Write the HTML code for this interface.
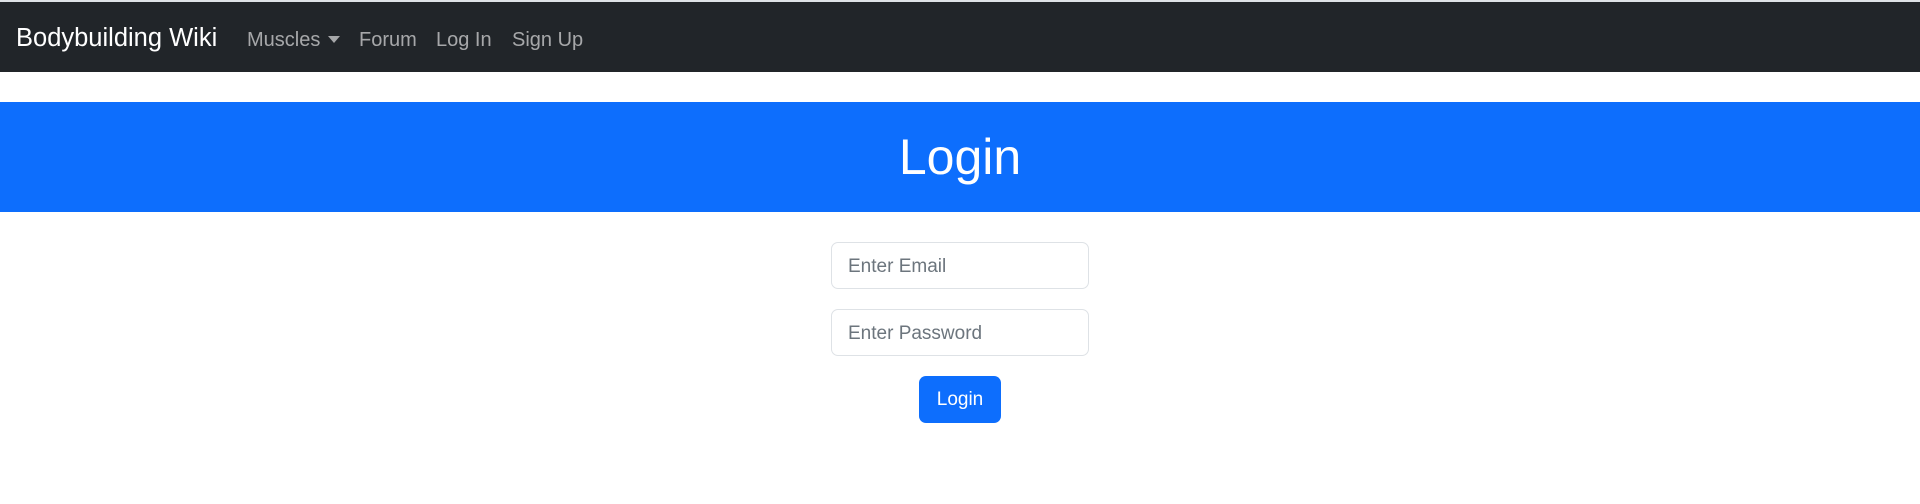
<!DOCTYPE html>
<html><head><style>
body{margin:0;width:1920px;height:504px;background:#fff;font-family:"Liberation Sans",sans-serif;overflow:hidden;position:relative}
.nav{position:absolute;top:2px;left:0;width:1920px;height:70px;background:#212529}
.top{position:absolute;top:0;left:0;width:1920px;height:2px;background:#dee2e6}
.brand{position:absolute;left:16px;top:22px;font-size:25.5px;color:#fff}
.link{position:absolute;top:27px;font-size:20px;color:rgba(255,255,255,.6)}
.caret{position:absolute;left:328px;top:34px;width:0;height:0;border-left:6px solid transparent;border-right:6px solid transparent;border-top:7px solid rgba(255,255,255,.6)}
.band{position:absolute;top:102px;left:0;width:1920px;height:110px;background:#0d6efd;color:#fff;text-align:center;font-size:50px;font-weight:300;line-height:110px}
.inp{position:absolute;left:831px;width:258px;height:47px;border:1px solid #dee2e6;border-radius:7px;box-sizing:border-box;font-size:19px;color:#6c757d;padding-left:16px;line-height:48px}
.btn{position:absolute;left:919px;top:376px;width:82px;height:47px;background:#0d6efd;border-radius:7px;color:#fff;font-size:19px;text-align:center;line-height:47px}
</style></head><body>
<div class="top"></div>
<div class="nav">
<div class="brand">Bodybuilding Wiki</div>
<div class="link" style="left:247px">Muscles</div>
<div class="caret"></div>
<div class="link" style="left:359px">Forum</div>
<div class="link" style="left:436px">Log In</div>
<div class="link" style="left:512px">Sign Up</div>
</div>
<div class="band">Login</div>
<div class="inp" style="top:242px">Enter Email</div>
<div class="inp" style="top:309px">Enter Password</div>
<div class="btn">Login</div>
</body></html>
